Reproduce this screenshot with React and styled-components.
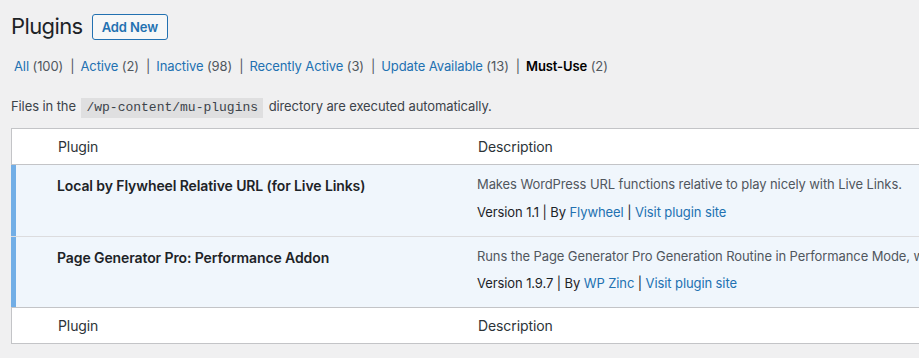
import React from "react";
import styled, { createGlobalStyle } from "styled-components";

const GlobalStyle = createGlobalStyle`
  html, body {
    margin: 0;
    padding: 0;
    background: #f0f0f1;
    overflow: hidden;
  }
  body {
    font-family: Inter, "Noto Sans", "Liberation Sans", sans-serif;
    font-size: 13px;
    letter-spacing: -0.1px;
    color: #3c434a;
  }
`;

const filters = [
  { label: "All", count: 100 },
  { label: "Active", count: 2 },
  { label: "Inactive", count: 98 },
  { label: "Recently Active", count: 3 },
  { label: "Update Available", count: 13 },
  { label: "Must-Use", count: 2, current: true },
];

const plugins = [
  {
    name: "Local by Flywheel Relative URL (for Live Links)",
    description:
      "Makes WordPress URL functions relative to play nicely with Live Links.",
    version: "1.1",
    author: "Flywheel",
  },
  {
    name: "Page Generator Pro: Performance Addon",
    description:
      "Runs the Page Generator Pro Generation Routine in Performance Mode, when run via WP-CLI or the browser.",
    version: "1.9.7",
    author: "WP Zinc",
  },
];

const App = () => {
  return (
    <Wrap>
      <GlobalStyle />
      <TitleBar>
        <h1>Plugins</h1>
        <AddButton>Add New</AddButton>
      </TitleBar>

      <Filters>
        {filters.map((f, i) => (
          <li key={f.label}>
            <FilterLink current={f.current}>{f.label}</FilterLink>
            <span className="count"> ({f.count})</span>
            {i < filters.length - 1 && <span className="sep">|</span>}
          </li>
        ))}
      </Filters>

      <Notice>
        Files in the <code>/wp-content/mu-plugins</code> directory are executed
        automatically.
      </Notice>

      <Table>
        <HeadRow>
          <CheckCell />
          <NameCell>Plugin</NameCell>
          <DescCell>Description</DescCell>
        </HeadRow>
        {plugins.map((p, i) => (
          <PluginRow key={p.name} first={i === 0}>
            <CheckCell active />
            <NameCell>
              <strong>{p.name}</strong>
            </NameCell>
            <DescCell>
              <p className="desc">{p.description}</p>
              <div className="meta">
                Version {p.version} | By <a>{p.author}</a> |{" "}
                <a>Visit plugin site</a>
              </div>
            </DescCell>
          </PluginRow>
        ))}
        <FootRow>
          <CheckCell />
          <NameCell>Plugin</NameCell>
          <DescCell>Description</DescCell>
        </FootRow>
      </Table>
    </Wrap>
  );
};

export default App;

const Wrap = styled.div`
  padding: 0 0 0 11px;
  width: 1200px;
`;

const TitleBar = styled.div`
  display: flex;
  align-items: center;
  height: 52px;

  h1 {
    margin: 0;
    font-size: 22px;
    letter-spacing: -0.6px;
    font-weight: 400;
    line-height: 1.3;
    color: #1d2327;
  }
`;

const AddButton = styled.button`
  margin-left: 9px;
  margin-top: 1px;
  height: 26px;
  padding: 0 9px;
  border: 1px solid #2271b1;
  border-radius: 3px;
  background: #f6f7f7;
  color: #2271b1;
  font-family: inherit;
  font-size: 13px;
  letter-spacing: -0.1px;
  font-weight: 600;
  cursor: pointer;
`;

const Filters = styled.ul`
  display: flex;
  list-style: none;
  margin: 4px 0 0 3px;
  padding: 0;
  height: 20px;
  line-height: 20px;
  color: #646970;

  li {
    white-space: nowrap;
  }

  .count {
    color: #50575e;
  }

  .sep {
    color: #50575e;
    margin: 0 6px 0 7px;
  }
`;

const FilterLink = styled.a`
  color: ${(props) => (props.current ? "#000" : "#2271b1")};
  font-weight: ${(props) => (props.current ? 600 : 400)};
  text-decoration: none;
`;

const Notice = styled.p`
  margin: 19px 0 0;
  line-height: 22px;
  color: #3c434a;

  code {
    font-family: "Liberation Mono", "DejaVu Sans Mono", monospace;
    font-size: 13px;
    letter-spacing: 0;
    background: rgba(0, 0, 0, 0.07);
    padding: 2px 5px 3px;
    margin: 0 2px;
    color: #3c434a;
  }
`;

const Table = styled.div`
  margin-top: 9px;
  border: 1px solid #c3c4c7;
  background: #fff;
  width: 1150px;
`;

const Row = styled.div`
  display: grid;
  grid-template-columns: 36px 420px 1fr;
`;

const HeadRow = styled(Row)`
  height: 35px;
  align-items: center;
  border-bottom: 1px solid #c3c4c7;
  font-size: 14px;
  color: #2c3338;
`;

const FootRow = styled(HeadRow)`
  border-bottom: none;
  border-top: 1px solid #c3c4c7;
`;

const PluginRow = styled(Row)`
  background: #f0f6fc;
  border-top: ${(props) => (props.first ? "none" : "1px solid #dcdcde")};
  margin-left: -1px;
`;

const CheckCell = styled.div`
  align-self: stretch;
  border-left: ${(props) => (props.active ? "5px solid #72aee6" : "none")};
`;

const NameCell = styled.div`
  padding: 0 10px;

  strong {
    display: block;
    padding-top: 10px;
    font-size: 14px;
    line-height: 21px;
    font-weight: 600;
    color: #1d2327;
  }
`;

const DescCell = styled.div`
  padding: 0 10px;
  white-space: nowrap;

  .desc {
    margin: 10px 0 8px;
    line-height: 19.5px;
    color: #50575e;
  }

  .meta {
    line-height: 19.5px;
    padding-bottom: 13.5px;
    color: #1d2327;
  }

  a {
    color: #2271b1;
    text-decoration: none;
  }
`;
